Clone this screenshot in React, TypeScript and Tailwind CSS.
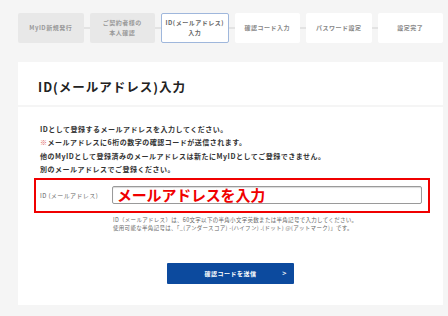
import React from "react";

const steps: { label: React.ReactNode; kind: "done" | "active" | "todo" }[] = [
  { label: "MyID新規発行", kind: "done" },
  { label: (<>ご契約者様の<br />本人確認</>), kind: "done" },
  { label: (<>ID(メールアドレス)<br />入力</>), kind: "active" },
  { label: "確認コード入力", kind: "todo" },
  { label: "パスワード設定", kind: "todo" },
  { label: "設定完了", kind: "todo" },
];

export default function App() {
  return (
    <div className="w-[448px] h-[316px] overflow-hidden bg-[#f5f5f5] font-['Noto_Sans_CJK_JP',sans-serif]">
      <div className="ml-[18px] w-[425px] pt-[13px]">
        {/* steps */}
        <div className="flex items-center">
          {steps.map((s, i) => (
            <React.Fragment key={i}>
              {i > 0 && <div className="w-[6px] h-[2px] bg-[#e3e3e3] shrink-0" />}
              <div
                className={
                  s.kind === "done"
                    ? "flex-1 h-[30px] flex items-center justify-center text-center rounded-[2px] bg-[#e8e8e8] text-[#999] font-bold text-[6px] leading-[10px] tracking-[0.5px]"
                    : s.kind === "active"
                    ? "flex-1 h-[30px] flex items-center justify-center text-center rounded-[2px] bg-white border border-[#9fb7dc] text-[#666] font-bold text-[6px] leading-[10px] tracking-[0.5px]"
                    : "flex-1 h-[30px] flex items-center justify-center text-center rounded-[2px] bg-white text-[#888] font-bold text-[6px] leading-[10px] tracking-[0.5px]"
                }
              >
                <span>{s.label}</span>
              </div>
            </React.Fragment>
          ))}
        </div>

        {/* panel */}
        <div className="mt-[19px] flex flex-col gap-[2px]">
          <div className="h-[43px] bg-white pl-[20px] pt-[15px]">
            <h1 className="text-[12.5px] leading-[20px] font-bold tracking-[1px] text-[#222]">ID(メールアドレス)入力</h1>
          </div>
          <div className="h-[198px] bg-white pt-[16px]">
            <div className="pl-[22px] text-[7px] leading-[13.4px] font-bold tracking-[0.5px] text-[#333]">
              <p>IDとして登録するメールアドレスを入力してください。</p>
              <p><span className="text-[#e06060]">※</span>メールアドレスに6桁の数字の確認コードが送信されます。</p>
              <p>他のMyIDとして登録済みのメールアドレスは新たにMyIDとしてご登録できません。</p>
              <p>別のメールアドレスでご登録ください。</p>
            </div>
            <div className="ml-[16px] mr-[13px] mt-[1px] h-[35px] border-2 border-[#f00000] flex items-center pl-[4px] pr-[6px]">
              <span className="w-[72px] shrink-0 text-[6px] tracking-[0.4px] text-[#666]">ID (メールアドレス)</span>
              <div className="flex-1 h-[18px] border border-[#9a9a9a] rounded-[2px] bg-white shadow-[inset_0_1px_1px_rgba(0,0,0,0.15)] flex items-center pl-[4px]">
                <span className="text-[15px] leading-[18px] font-bold text-[#f00000] tracking-[-0.2px]">メールアドレスを入力</span>
              </div>
            </div>
            <div className="pl-[95px] mt-[3px] text-[5.5px] leading-[8px] tracking-[0.3px] text-[#666]">
              <p>ID（メールアドレス）は、60文字以下の半角小文字英数または半角記号で入力してください。</p>
              <p>使用可能な半角記号は、「_(アンダースコア) -(ハイフン) .(ドット) @(アットマーク)」です。</p>
            </div>
            <div className="mt-[31px] flex justify-center">
              <button className="relative w-[127px] h-[21px] bg-[#0c4a9e] rounded-[1px] text-white text-[6px] font-bold tracking-[0.5px] flex items-center justify-center">
                確認コードを送信
                <span className="absolute right-[7px] top-1/2 -translate-y-1/2 text-[7px] font-bold">&gt;</span>
              </button>
            </div>
          </div>
        </div>
      </div>
    </div>
  );
}
